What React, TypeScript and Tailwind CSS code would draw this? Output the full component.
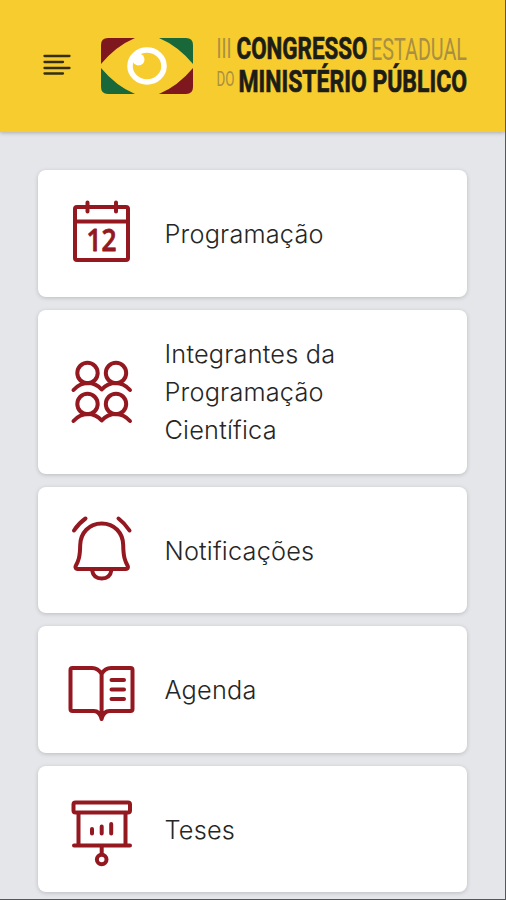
import type { ReactNode } from "react";

interface IconProps {
  children: ReactNode;
}

function Icon({ children }: IconProps) {
  return (
    <svg
      viewBox="-38 -38 76 76"
      className="h-[76px] w-[76px] shrink-0"
      fill="none"
      stroke="#941820"
      strokeWidth="4"
      strokeLinecap="round"
      strokeLinejoin="round"
    >
      {children}
    </svg>
  );
}

function CalendarIcon() {
  return (
    <Icon>
      <rect x="-26" y="-26" width="53" height="53" rx="2" />
      <path d="M-26 -11.5H27M-13.5 -30.5V-21.5M15 -30.5V-21.5" />
      <text
        x="-14.5"
        y="18"
        textLength="30"
        lengthAdjust="spacingAndGlyphs"
        fill="#941820"
        strokeWidth="0.8"
        className="font-['Open_Sans',sans-serif] text-[30px] font-semibold"
      >
        12
      </text>
    </Icon>
  );
}

function PeopleRow() {
  return (
    <>
      <circle cx="-13.5" cy="-19" r="10.2" />
      <circle cx="15" cy="-19" r="10.2" />
      <path d="M-27.5 -2Q-21 -9 -13.5 -9Q-5 -9 .7 -2.5Q6.5 -9 15 -9Q22.5 -9 29 -2" />
    </>
  );
}

function PeopleIcon() {
  return (
    <Icon>
      <PeopleRow />
      <g transform="translate(0 31)">
        <PeopleRow />
      </g>
    </Icon>
  );
}

function BellIcon() {
  return (
    <Icon>
      <path d="M.7 -26.5C-12 -26.5 -20.5 -17 -20.8 -5C-21 7 -22.5 11 -25.3 16C-26.2 17.8 -25 19 -23.5 19H25C26.5 19 27.6 17.8 26.7 16C24 11 22.4 7 22.2 -5C22 -17 13.5 -26.5 .7 -26.5Z" />
      <path d="M-9 20C-8 26 -4 28.5 .7 28.5S9.5 26 10.5 20" />
      <path d="M-27 -19.5Q-22 -27 -15.5 -31.5M17.5 -31.5Q23.5 -27 28.5 -19.5" />
    </Icon>
  );
}

function BookIcon() {
  return (
    <Icon>
      <path d="M.6 -16Q-3 -22 -9 -22H-28.5Q-30.5 -22 -30.5 -20V19Q-30.5 21 -28.5 21H-7Q-1.5 21 .6 29Q2.7 21 8.5 21H29.5Q31.5 21 31.5 19V-20Q31.5 -22 29.5 -22H10Q4 -22 .6 -16V26" />
      <path d="M10.5 -10H23M10.5 -.5H23M10.5 9H23" />
    </Icon>
  );
}

function BoardIcon() {
  return (
    <Icon>
      <rect x="-27.5" y="-26.5" width="56.5" height="10" rx="2" />
      <path d="M-22.5 -16V15.5M24.5 -16V15.5M-27 16.5H29M.7 17V25" />
      <circle cx=".7" cy="30.5" r="4.8" />
      <path d="M-9 0V4.5M.7 -2.5V4.5M10.2 -5V4.5" />
    </Icon>
  );
}

function EyeLogo() {
  return (
    <svg viewBox="0 0 92 56" className="ml-[30px] h-14 w-[92px] shrink-0">
      <path d="M7 0H34Q15 8 0 26V7Q0 0 7 0Z" fill="#7f171e" />
      <path d="M58 0H85Q92 0 92 7V26Q77 8 58 0Z" fill="#18683a" />
      <path d="M0 30Q15 48 34 56H7Q0 56 0 49Z" fill="#18683a" />
      <path d="M92 30V49Q92 56 85 56H58Q77 48 92 30Z" fill="#7f171e" />
      <ellipse cx="46" cy="28" rx="17" ry="16" fill="none" stroke="#fff" strokeWidth="5.5" />
      <circle cx="37.5" cy="21.5" r="6" fill="#fff" />
    </svg>
  );
}

const wordmark = [
  { text: "III", x: -0.5, y: 24, size: 28, width: 15, bold: false },
  { text: "CONGRESSO", x: 19.5, y: 25, size: 31, width: 131, bold: true },
  { text: "ESTADUAL", x: 154, y: 25.5, size: 31, width: 96, bold: false },
  { text: "DO", x: -0.5, y: 52, size: 20, width: 18, bold: false },
  { text: "MINISTÉRIO PÚBLICO", x: 21.5, y: 57.5, size: 31, width: 228.5, bold: true },
];

function Wordmark() {
  return (
    <svg viewBox="0 0 251 64" className="ml-[24px] h-16 w-[251px] shrink-0 overflow-visible">
      {wordmark.map((word) => (
        <text
          key={word.text}
          x={word.x}
          y={word.y}
          fontSize={word.size}
          textLength={word.width}
          lengthAdjust="spacingAndGlyphs"
          fill={word.bold ? "#1c1d16" : "#a88f42"}
          stroke={word.bold ? "#1c1d16" : "none"}
          strokeWidth="0.7"
          className={
            word.bold
              ? "font-['Roboto',sans-serif] font-bold"
              : "font-['Roboto',sans-serif] font-normal"
          }
        >
          {word.text}
        </text>
      ))}
    </svg>
  );
}

function MenuButton() {
  return (
    <button type="button" aria-label="Menu" className="mb-0.5 ml-[43px] h-[22px] w-7 shrink-0">
      <svg viewBox="0 0 28 22" className="h-[22px] w-7" stroke="#352f12" strokeWidth="2.3" strokeLinecap="round">
        <path d="M1.5 2H26.5M1.5 8H20M1.5 14H26.5M1.5 19.5H20" />
      </svg>
    </button>
  );
}

interface MenuCardProps {
  icon: ReactNode;
  label: string;
}

function MenuCard({ icon, label }: MenuCardProps) {
  return (
    <a className="flex min-h-[126.5px] items-center rounded-[8px] bg-white py-[24.7px] pr-[64px] pl-[25px] shadow-[0_1px_4px_rgba(0,0,0,0.18)]">
      {icon}
      <span className="ml-[25.5px] pt-px text-[25.3px] leading-[38px] tracking-[0.2px]">{label}</span>
    </a>
  );
}

const items = [
  { label: "Programação", icon: <CalendarIcon /> },
  { label: "Integrantes da Programação Científica", icon: <PeopleIcon /> },
  { label: "Notificações", icon: <BellIcon /> },
  { label: "Agenda", icon: <BookIcon /> },
  { label: "Teses", icon: <BoardIcon /> },
];

export default function App() {
  return (
    <div className="h-[900px] w-[506px] overflow-hidden border-r border-b border-[#55575a] bg-[#e4e6ea] font-['Inter',sans-serif] font-light text-[#262626]">
      <header className="flex h-[132px] items-center bg-[#f7cc2f] shadow-[0_1px_4px_rgba(0,0,0,0.25)]">
        <MenuButton />
        <EyeLogo />
        <Wordmark />
      </header>
      <main className="flex flex-col gap-[13px] px-[38px] pt-[38px]">
        {items.map((item) => (
          <MenuCard key={item.label} icon={item.icon} label={item.label} />
        ))}
      </main>
    </div>
  );
}
